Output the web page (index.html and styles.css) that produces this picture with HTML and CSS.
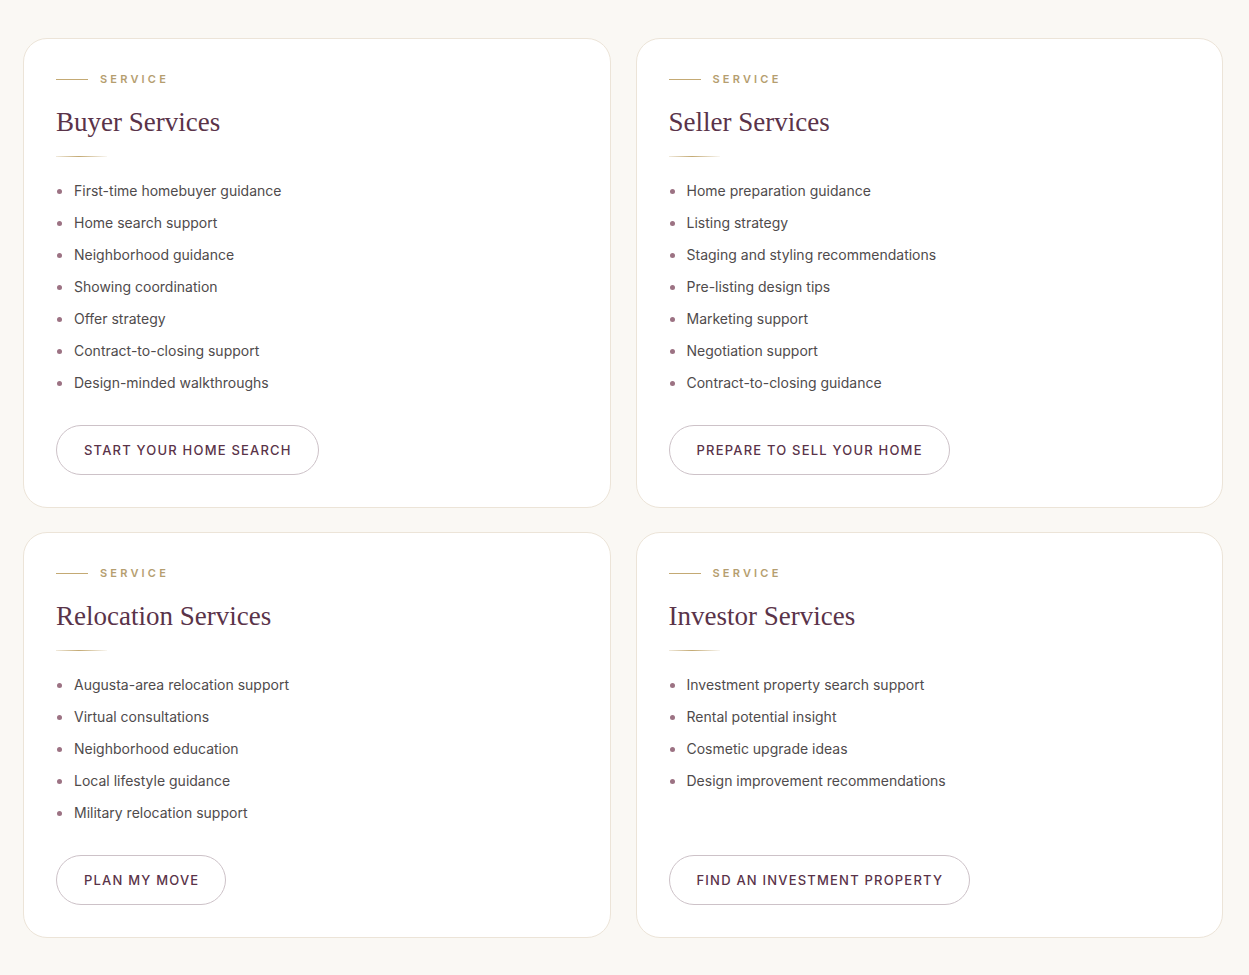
FILE: index.html
```html
<!DOCTYPE html>
<html lang="en">
<head>
    <meta charset="UTF-8">
    <meta name="viewport" content="width=device-width, initial-scale=1.0">
    <title>Services</title>
    <link rel="stylesheet" href="styles.css">
</head>
<body>
    <section class="services">

        <article class="service-card">
            <p class="eyebrow">Service</p>
            <h2>Buyer Services</h2>
            <span class="divider"></span>
            <ul class="service-list">
                <li>First-time homebuyer guidance</li>
                <li>Home search support</li>
                <li>Neighborhood guidance</li>
                <li>Showing coordination</li>
                <li>Offer strategy</li>
                <li>Contract-to-closing support</li>
                <li>Design-minded walkthroughs</li>
            </ul>
            <a class="btn-outline" href="#">Start Your Home Search</a>
        </article>

        <article class="service-card">
            <p class="eyebrow">Service</p>
            <h2>Seller Services</h2>
            <span class="divider"></span>
            <ul class="service-list">
                <li>Home preparation guidance</li>
                <li>Listing strategy</li>
                <li>Staging and styling recommendations</li>
                <li>Pre-listing design tips</li>
                <li>Marketing support</li>
                <li>Negotiation support</li>
                <li>Contract-to-closing guidance</li>
            </ul>
            <a class="btn-outline" href="#">Prepare to Sell Your Home</a>
        </article>

        <article class="service-card">
            <p class="eyebrow">Service</p>
            <h2>Relocation Services</h2>
            <span class="divider"></span>
            <ul class="service-list">
                <li>Augusta-area relocation support</li>
                <li>Virtual consultations</li>
                <li>Neighborhood education</li>
                <li>Local lifestyle guidance</li>
                <li>Military relocation support</li>
            </ul>
            <a class="btn-outline" href="#">Plan My Move</a>
        </article>

        <article class="service-card">
            <p class="eyebrow">Service</p>
            <h2>Investor Services</h2>
            <span class="divider"></span>
            <ul class="service-list">
                <li>Investment property search support</li>
                <li>Rental potential insight</li>
                <li>Cosmetic upgrade ideas</li>
                <li>Design improvement recommendations</li>
            </ul>
            <a class="btn-outline" href="#">Find an Investment Property</a>
        </article>

    </section>
</body>
</html>
```

FILE: styles.css
```css
body {
    margin: 0;
    font-family: Inter, "Noto Sans", sans-serif;
    background-color: #faf8f4;
    color: #4f4b4c;
}

.services {
    display: grid;
    grid-template-columns: 1fr 1fr;
    gap: 24px 25px;
    padding: 38px 26px 38px 23px;
}

.service-card {
    display: flex;
    flex-direction: column;
    align-items: flex-start;
    background-color: #fff;
    border: 1px solid #ece4d8;
    border-radius: 24px;
    padding: 32px;
}

.eyebrow {
    display: flex;
    align-items: center;
    gap: 12px;
    margin: 0;
    font-size: 11px;
    line-height: 16px;
    font-weight: 600;
    letter-spacing: 3.2px;
    text-transform: uppercase;
    color: #b59e6f;
}

.eyebrow::before {
    content: "";
    width: 32px;
    height: 1px;
    background-color: #c4aa74;
}

.service-card h2 {
    margin: 18px 0 0;
    font-family: "Liberation Serif", "DejaVu Serif", serif;
    font-weight: 400;
    font-size: 27px;
    line-height: 34px;
    color: #5a3349;
}

.divider {
    display: block;
    width: 51px;
    height: 1px;
    margin-top: 17px;
    background: linear-gradient(90deg, rgba(196, 170, 116, 0.25), #c4aa74 45%, rgba(196, 170, 116, 0.1));
}

.service-list {
    list-style: none;
    margin: 23px 0 31px;
    padding: 0;
    display: flex;
    flex-direction: column;
    gap: 10px;
}

.service-list li {
    display: flex;
    align-items: center;
    gap: 12px;
    font-size: 14px;
    line-height: 22px;
}

.service-list li::before {
    content: "";
    width: 5px;
    height: 5px;
    margin-left: 1px;
    border-radius: 50%;
    background-color: #9c7283;
}

.btn-outline {
    margin-top: auto;
    padding: 15px 26px 15px 27px;
    border: 1px solid #cdc2c8;
    border-radius: 999px;
    font-size: 13px;
    line-height: 18px;
    font-weight: 500;
    letter-spacing: 1.2px;
    text-transform: uppercase;
    text-decoration: none;
    color: #5a3349;
}
```
